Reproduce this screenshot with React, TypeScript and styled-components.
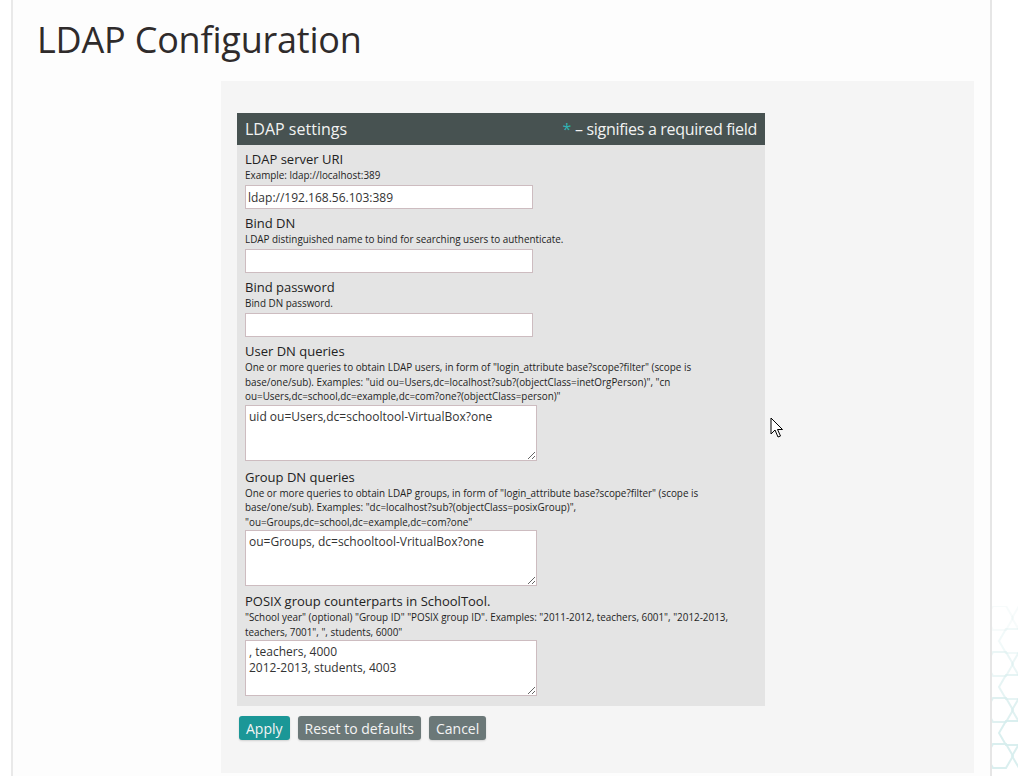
import React from "react";
import styled, { createGlobalStyle } from "styled-components";

const GlobalStyle = createGlobalStyle`
  html, body { margin: 0; padding: 0; }
  body {
    background: #ffffff;
    font-family: "Open Sans", "Noto Sans", sans-serif;
    color: #333;
    overflow: hidden;
  }
`;

const Page = styled.div`
  display: flex;
  min-height: 776px;
  width: 1018px;
  overflow: hidden;
`;

const Gutter = styled.div<{ $w: number }>`
  flex: 0 0 ${(p) => p.$w}px;
  background: #ffffff;
  position: relative;
  overflow: hidden;
`;

const Main = styled.div`
  flex: 0 0 977px;
  border-left: 2px solid #e9e9e9;
  border-right: 2px solid #e6e6e6;
  background: #fdfdfd;
  display: flex;
  flex-direction: column;
`;

const Title = styled.h1`
  margin: 16px 0 0 24px;
  font-weight: 400;
  font-size: 36px;
  line-height: 48px;
  color: #2f2b2b;
  letter-spacing: -0.2px;
`;

const Panel = styled.div`
  margin: 17px 16px 0 208px;
  background: #f5f5f5;
  padding: 32px 16px 33px 16px;
  display: flex;
  flex-direction: column;
  align-items: flex-start;
`;

const Box = styled.div`
  width: 528px;
  background: #e4e4e4;
  padding-bottom: 10px;
`;

const BoxHeader = styled.div`
  height: 32px;
  background: #475251;
  color: #f2f2f2;
  display: flex;
  align-items: center;
  justify-content: space-between;
  padding: 0 8px;
  font-size: 16px;
`;

const HeaderNote = styled.span`
  letter-spacing: -0.3px;
`;

const Star = styled.span`
  color: #2fb3b3;
`;

const Fields = styled.div`
  display: flex;
  flex-direction: column;
  padding: 6px 8px 0 8px;
`;

const Field = styled.div<{ $gap: number }>`
  display: flex;
  flex-direction: column;
  align-items: flex-start;
  margin-bottom: ${(p) => p.$gap}px;
`;

const Label = styled.div`
  font-size: 13px;
  line-height: 16px;
  color: #222;
`;

const Desc = styled.div`
  font-size: 9.9px;
  line-height: 14.5px;
  color: #1e1e1e;
  margin-top: 1px;
`;

const TextInput = styled.input`
  box-sizing: border-box;
  width: 288px;
  height: 24px;
  margin-top: 2.5px;
  border: 1px solid #cdbcc0;
  background: #fff;
  font-family: "Open Sans", "Noto Sans", sans-serif;
  font-size: 12px;
  color: #333;
  padding: 0 3px 0 2px;
  outline: none;
`;

const TextArea = styled.textarea`
  box-sizing: border-box;
  display: block;
  width: 292px;
  height: 56px;
  margin-top: 1px;
  border: 1px solid #cdbcc0;
  background: #fff;
  font-family: "Open Sans", "Noto Sans", sans-serif;
  font-size: 12px;
  line-height: 16px;
  color: #333;
  padding: 3px 3px 2px 3px;
  resize: both;
  outline: none;
`;

const Buttons = styled.div`
  display: flex;
  gap: 8px;
  margin-top: 10px;
  padding-left: 2px;
`;

const Button = styled.button<{ $primary?: boolean }>`
  height: 24px;
  border: none;
  border-radius: 3px;
  padding: 0 7px;
  background: ${(p) => (p.$primary ? "#1b9797" : "#6b7878")};
  color: #f4f4f4;
  font-family: "Open Sans", "Noto Sans", sans-serif;
  font-size: 14px;
  box-shadow: 0 1px 2px rgba(0, 0, 0, 0.15);
`;

const Cursor = styled.svg`
  position: absolute;
  left: 770px;
  top: 417px;
`;

const HexLayer = styled.svg`
  position: absolute;
  left: 0;
  top: 606px;
`;

function Hexes() {
  const cells: React.ReactNode[] = [];
  for (let r = 0; r < 7; r++) {
    for (let c = 0; c < 2; c++) {
      const x = c * 26 + (r % 2 ? 13 : 0) - 6;
      const y = r * 23;
      cells.push(
        <polygon
          key={`${r}-${c}`}
          points={`${x},${y + 12} ${x + 7},${y} ${x + 20},${y} ${x + 27},${y + 12} ${x + 20},${y + 24} ${x + 7},${y + 24}`}
          fill="none"
          stroke="#d6eded"
          strokeWidth="2"
          opacity={Math.min(0.9, 0.2 + r * 0.14)}
        />
      );
    }
  }
  return (
    <HexLayer width="28" height="176" viewBox="0 0 28 176">
      {cells}
    </HexLayer>
  );
}

export default function App() {
  return (
    <>
      <GlobalStyle />
      <Page>
        <Gutter $w={11} />
        <Main>
          <Title>LDAP Configuration</Title>
          <Panel>
            <Box>
              <BoxHeader>
                <span>LDAP settings</span>
                <HeaderNote>
                  <Star>*</Star> – signifies a required field
                </HeaderNote>
              </BoxHeader>
              <Fields>
                <Field $gap={6}>
                  <Label>LDAP server URI</Label>
                  <Desc>Example: ldap://localhost:389</Desc>
                  <TextInput defaultValue="ldap://192.168.56.103:389" />
                </Field>
                <Field $gap={6}>
                  <Label>Bind DN</Label>
                  <Desc>LDAP distinguished name to bind for searching users to authenticate.</Desc>
                  <TextInput defaultValue="" />
                </Field>
                <Field $gap={6}>
                  <Label>Bind password</Label>
                  <Desc>Bind DN password.</Desc>
                  <TextInput type="password" defaultValue="" />
                </Field>
                <Field $gap={8}>
                  <Label>User DN queries</Label>
                  <Desc>
                    One or more queries to obtain LDAP users, in form of "login_attribute base?scope?filter" (scope is
                    <br />
                    base/one/sub). Examples: "uid ou=Users,dc=localhost?sub?(objectClass=inetOrgPerson)", "cn
                    <br />
                    ou=Users,dc=school,dc=example,dc=com?one?(objectClass=person)"
                  </Desc>
                  <TextArea defaultValue="uid ou=Users,dc=schooltool-VirtualBox?one" />
                </Field>
                <Field $gap={7}>
                  <Label>Group DN queries</Label>
                  <Desc>
                    One or more queries to obtain LDAP groups, in form of "login_attribute base?scope?filter" (scope is
                    <br />
                    base/one/sub). Examples: "dc=localhost?sub?(objectClass=posixGroup)",
                    <br />
                    "ou=Groups,dc=school,dc=example,dc=com?one"
                  </Desc>
                  <TextArea defaultValue="ou=Groups, dc=schooltool-VritualBox?one" spellCheck />
                </Field>
                <Field $gap={0}>
                  <Label>POSIX group counterparts in SchoolTool.</Label>
                  <Desc>
                    "School year" (optional) "Group ID" "POSIX group ID". Examples: "2011-2012, teachers, 6001", "2012-2013,
                    <br />
                    teachers, 7001", ", students, 6000"
                  </Desc>
                  <TextArea defaultValue={", teachers, 4000\n2012-2013, students, 4003"} />
                </Field>
              </Fields>
            </Box>
            <Buttons>
              <Button $primary>Apply</Button>
              <Button>Reset to defaults</Button>
              <Button>Cancel</Button>
            </Buttons>
          </Panel>
        </Main>
        <Gutter $w={28}>
          <Hexes />
        </Gutter>
      </Page>
      <Cursor width="14" height="22" viewBox="0 0 14 22">
        <path
          d="M1 1 L1 17 L5 13 L8 20 L10.5 19 L7.5 12.5 L12.5 12.5 Z"
          fill="#fff"
          stroke="#000"
          strokeWidth="1"
          strokeLinejoin="round"
        />
      </Cursor>
    </>
  );
}
